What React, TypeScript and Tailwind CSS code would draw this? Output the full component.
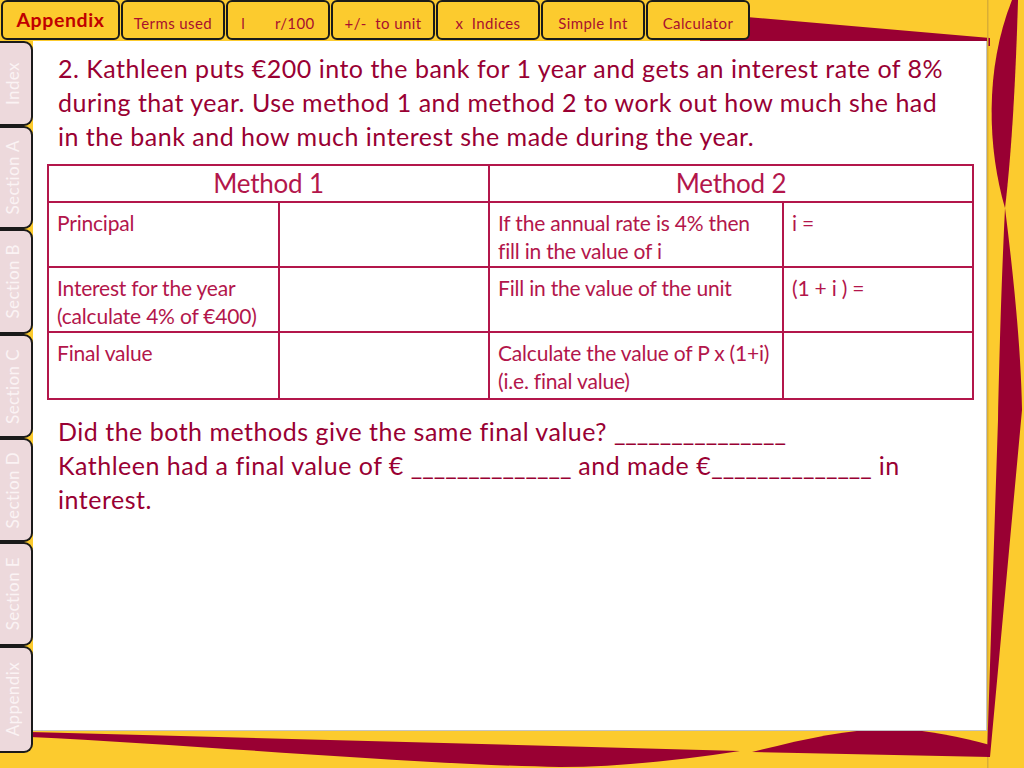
const topTabs = ["Terms used", "l       r/100", "+/-  to unit", "x  Indices", "Simple Int", "Calculator"];

const sideTabs = [
	{ label: "Index", h: "h-[85px]" },
	{ label: "Section A", h: "h-[103px]" },
	{ label: "Section B", h: "h-[105px]" },
	{ label: "Section C", h: "h-[104px]" },
	{ label: "Section D", h: "h-[104px]" },
	{ label: "Section E", h: "h-[104px]" },
	{ label: "Appendix", h: "h-[107px]" },
];

function Backdrop() {
	return (
		<svg className="absolute inset-0 h-full w-full" viewBox="0 0 1024 768" aria-hidden>
			<path d="M700 13 L990 38 L990 46 L700 46 Z" fill="#990033" />
			<rect x="987" y="0" width="1.5" height="768" fill="#D9AE35" />
			<path d="M1012 0 L1018 0 C1016 70 1012 150 1005 208 C988 150 984 70 1012 0 Z" fill="#990033" />
			<path d="M1005 208 C1014 280 1021 350 1022 410 L990 757 L987 757 L998 420 C1000 330 1002 270 1005 208 Z" fill="#990033" />
			<path d="M30 732 L740 751 C680 760 620 767 560 767 C420 765 200 745 30 737 Z" fill="#990033" />
			<path d="M752 752 C800 740 850 728 895 729 C930 730 960 737 990 745 L990 757 Z" fill="#990033" />
		</svg>
	);
}

function TopTabs() {
	return (
		<nav className="flex h-[41px] items-start pl-[1px]">
			<div className="flex h-[40px] w-[119px] items-center justify-center rounded-[6px] border-2 border-[#1a1a1a] bg-[#FCCB2E] text-[19.5px] font-bold tracking-[0.6px] text-[#C00000]">
				Appendix
			</div>
			<div className="ml-[1px] flex gap-[1px]">
				{topTabs.map((t) => (
					<div
						key={t}
						className="flex h-[40px] w-[104px] items-center justify-center whitespace-pre rounded-[6px] border-2 border-[#1a1a1a] bg-[#FCCB2E] pt-[6px] text-[15px] tracking-[0.4px] text-[#A8102E]"
					>
						{t}
					</div>
				))}
			</div>
		</nav>
	);
}

function SideTabs() {
	return (
		<aside className="flex w-[33px] flex-col">
			{sideTabs.map((s) => (
				<div
					key={s.label}
					className={`${s.h} flex items-center justify-center rounded-r-[9px] border-y-2 border-r-2 border-[#1a1a1a] bg-[#EDD9DC] pr-[5px]`}
				>
					<span className="rotate-180 text-[17px] tracking-[0.4px] text-[#FBF3F4] [writing-mode:vertical-rl]">{s.label}</span>
				</div>
			))}
		</aside>
	);
}

function MethodTable() {
	const td = "border-2 border-[#B3164B] align-top pl-[8px] pt-[6px] leading-[28px] whitespace-nowrap";
	const th = "border-2 border-[#B3164B] text-center text-[26px] leading-[33px]";
	return (
		<table className="ml-[14px] mt-[11px] w-[925px] table-fixed border-collapse text-[21px] tracking-[-0.2px] text-[#B3164B]">
			<colgroup>
				<col className="w-[231px]" />
				<col className="w-[210px]" />
				<col className="w-[294px]" />
				<col className="w-[190px]" />
			</colgroup>
			<tbody>
				<tr className="h-[37px]">
					<td colSpan={2} className={th}>Method 1</td>
					<td colSpan={2} className={th}>Method 2</td>
				</tr>
				<tr className="h-[65px]">
					<td className={td}>Principal</td>
					<td className={td}></td>
					<td className={td}>If the annual rate is 4% then<br />fill in the value of i</td>
					<td className={td}>i =</td>
				</tr>
				<tr className="h-[65px]">
					<td className={td}>Interest for the year<br />(calculate 4% of €400)</td>
					<td className={td}></td>
					<td className={td}>Fill in the value of the unit</td>
					<td className={td}>(1 + i ) =</td>
				</tr>
				<tr className="h-[67px]">
					<td className={td}>Final value</td>
					<td className={td}></td>
					<td className={td}>Calculate the value of P x (1+i)<br />(i.e. final value)</td>
					<td className={td}></td>
				</tr>
			</tbody>
		</table>
	);
}

function Blank({ n }: { n: number }) {
	return <span className="tracking-normal">{"_".repeat(n)}</span>;
}

export default function App() {
	return (
		<div className="relative h-[768px] w-[1024px] overflow-hidden bg-[#FCCB2E] font-['Lato',sans-serif]">
			<Backdrop />
			<div className="relative z-10 flex flex-col">
				<TopTabs />
				<div className="flex items-start">
					<SideTabs />
					<main className="h-[690px] w-[954px] border-b border-r border-[#c4c4c4] bg-white">
						<p className="whitespace-nowrap pl-[25px] pt-[10px] text-[25px] leading-[34px] tracking-[0.5px] text-[#990033]">
							2. Kathleen puts €200 into the bank for 1 year and gets an interest rate of 8%<br />
							during that year. Use method 1 and method 2 to work out how much she had<br />
							in the bank and how much interest she made during the year.
						</p>
						<MethodTable />
						<p className="whitespace-nowrap pl-[25px] pt-[14px] text-[25px] leading-[34px] tracking-[0.5px] text-[#990033]">
							Did the both methods give the same final value? <Blank n={15} /><br />
							Kathleen had a final value of € <Blank n={14} /> and made €<Blank n={14} /> in<br />
							interest.
						</p>
					</main>
				</div>
			</div>
		</div>
	);
}
